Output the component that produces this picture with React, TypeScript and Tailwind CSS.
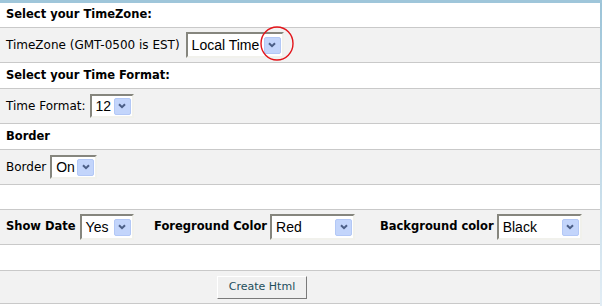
import React from "react";

const font = "font-['DejaVu_Sans',Verdana,sans-serif]";

type SelectProps = { value: string; className: string };

const Select = ({ value, className }: SelectProps) => (
  <span
    className={`inline-flex items-center justify-between bg-white border-2 border-t-[#86867e] border-l-[#86867e] border-r-[#f1f1ec] border-b-[#f1f1ec] pl-[4px] pr-[1px] font-['Liberation_Sans',Arial,sans-serif] text-[14px] font-normal text-black ${className}`}
  >
    <span className="leading-none">{value}</span>
    <span className="flex h-[17px] w-[17px] items-center justify-center rounded-[2px] border border-[#b3c8f6] bg-[#c3d5fb]">
      <svg width="8" height="6" viewBox="0 0 8 6">
        <path d="M1 1.2 L4 4.2 L7 1.2" fill="none" stroke="#4b5e86" strokeWidth="2" />
      </svg>
    </span>
  </span>
);

const Heading = ({ text, h }: { text: string; h: string }) => (
  <div className={`flex items-center border-b border-[#c9c9c9] bg-white pl-[6px] text-[11.5px] font-bold text-black ${h}`}>
    {text}
  </div>
);

const Row = ({ children, h }: { children?: React.ReactNode; h: string }) => (
  <div className={`flex items-center border-b border-[#c9c9c9] bg-[#f2f2f2] pl-[6px] text-[12px] text-black ${h}`}>
    {children}
  </div>
);

export default function App() {
  return (
    <div className={`relative flex h-[306px] w-[602px] flex-col bg-white ${font}`}>
      <div className="h-[3px] w-full bg-[#9fc6da]" />
      <div className="flex flex-1">
        <div className="flex w-[600px] flex-col">
          <Heading text="Select your TimeZone:" h="h-[25px]" />
          <Row h="h-[35px]">
            <span className="mr-[6px]">TimeZone (GMT-0500 is EST)</span>
            <Select value="Local Time" className="h-[26px] w-[98px]" />
          </Row>
          <Heading text="Select your Time Format:" h="h-[26px]" />
          <Row h="h-[35px]">
            <span className="mr-[4px]">Time Format:</span>
            <Select value="12" className="h-[24px] w-[44px]" />
          </Row>
          <Heading text="Border" h="h-[26px]" />
          <Row h="h-[35px]">
            <span className="mr-[4px]">Border</span>
            <Select value="On" className="h-[24px] w-[47px]" />
          </Row>
          <div className="h-[25px] border-b border-[#c9c9c9] bg-white" />
          <Row h="h-[35px]">
            <div className="flex w-[148px] items-center text-[11.5px] font-bold">
              <span className="mr-[4px]">Show Date</span>
              <Select value="Yes" className="h-[26px] w-[54px]" />
            </div>
            <div className="flex w-[226px] items-center text-[11.5px] font-bold">
              <span className="mr-[3px]">Foreground Color</span>
              <Select value="Red" className="h-[26px] w-[85px]" />
            </div>
            <div className="flex items-center text-[11.5px] font-bold">
              <span className="mr-[3px]">Background color</span>
              <Select value="Black" className="h-[26px] w-[85px]" />
            </div>
          </Row>
          <div className="h-[26px] border-b border-[#c9c9c9] bg-white" />
          <div className="flex h-[33px] items-center border-b border-[#c9c9c9] bg-[#f2f2f2]">
            <button className="ml-[217px] h-[23px] w-[90px] border border-t-white border-l-white border-r-[#7a7a7a] border-b-[#7a7a7a] bg-[#f0f0f0] text-[11px] text-[#1d4e5c]">
              Create Html
            </button>
          </div>
        </div>
        <div className="w-[2px] bg-gradient-to-b from-[#9cc4d8] to-[#e2edf5]" />
      </div>
      <svg className="pointer-events-none absolute left-0 top-0" width="602" height="306">
        <ellipse cx="277" cy="43.5" rx="16" ry="16.5" fill="none" stroke="#e3141a" strokeWidth="1.4" />
      </svg>
    </div>
  );
}
